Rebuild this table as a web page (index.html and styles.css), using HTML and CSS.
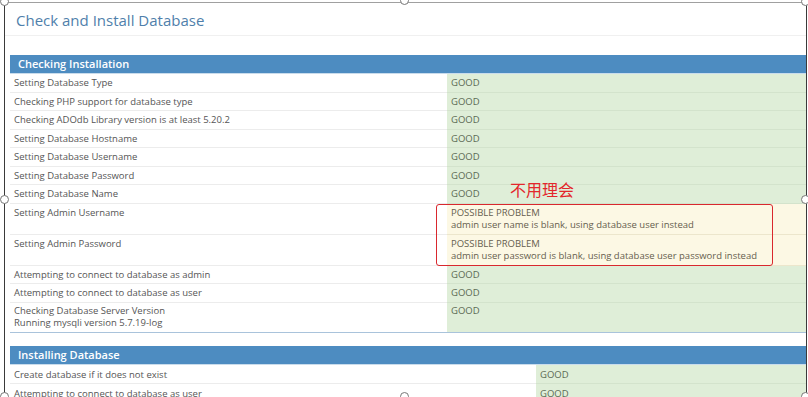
FILE: index.html
```html
<!DOCTYPE html>
<html>
<head>
<meta charset="utf-8">
<link rel="stylesheet" href="styles.css">
</head>
<body>
<div class="frame">
  <h1 class="title">Check and Install Database</h1>
  <div class="content">
    <div class="section-head">Checking Installation</div>
    <div class="table t1">
      <div class="lbl">Setting Database Type</div><div class="val ok">GOOD</div>
      <div class="lbl">Checking PHP support for database type</div><div class="val ok">GOOD</div>
      <div class="lbl">Checking ADOdb Library version is at least 5.20.2</div><div class="val ok">GOOD</div>
      <div class="lbl">Setting Database Hostname</div><div class="val ok">GOOD</div>
      <div class="lbl">Setting Database Username</div><div class="val ok">GOOD</div>
      <div class="lbl">Setting Database Password</div><div class="val ok">GOOD</div>
      <div class="lbl">Setting Database Name</div><div class="val ok">GOOD</div>
      <div class="lbl two">Setting Admin Username</div><div class="val warn two">POSSIBLE PROBLEM<br>admin user name is blank, using database user instead</div>
      <div class="lbl two">Setting Admin Password</div><div class="val warn two">POSSIBLE PROBLEM<br>admin user password is blank, using database user password instead</div>
      <div class="lbl">Attempting to connect to database as admin</div><div class="val ok">GOOD</div>
      <div class="lbl">Attempting to connect to database as user</div><div class="val ok">GOOD</div>
      <div class="lbl last">Checking Database Server Version<br>Running mysqli version 5.7.19-log</div><div class="val ok last">GOOD</div>
    </div>
    <div class="section-head second">Installing Database</div>
    <div class="table t2">
      <div class="lbl">Create database if it does not exist</div><div class="val ok">GOOD</div>
      <div class="lbl">Attempting to connect to database as user</div><div class="val ok">GOOD</div>
    </div>
  </div>
  <div class="note">不用理会</div>
  <div class="note-box"></div>
</div>
<div class="handle h-tl"></div>
<div class="handle h-tm"></div>
<div class="handle h-tr"></div>
<div class="handle h-ml"></div>
<div class="handle h-mr"></div>
<div class="handle h-bl"></div>
<div class="handle h-bm"></div>
<div class="handle h-br"></div>
</body>
</html>
```
FILE: styles.css
```css
html, body {
  margin: 0;
  padding: 0;
  background: #ffffff;
  width: 808px;
  height: 397px;
  overflow: hidden;
}
body {
  position: relative;
  font-family: "Open Sans", "Noto Sans", sans-serif;
  padding: 2px 0 0 4px;
  box-sizing: border-box;
}
.frame {
  position: relative;
  width: 803px;
  height: 400px;
  box-sizing: border-box;
  border-top: 1px solid #a0a0a0;
  border-left: 1px solid #3a3a3a;
  border-right: 1px solid #3a3a3a;
  overflow: hidden;
  background: #fff;
}
.title {
  margin: 0;
  height: 33px;
  box-sizing: border-box;
  padding: 7px 0 0 11px;
  font-size: 15px;
  font-weight: normal;
  line-height: 20px;
  color: #4f7fab;
  border-bottom: 1px solid #f0f0f0;
}
.content {
  padding: 19px 0 0 5px;
}
.section-head {
  height: 18px;
  line-height: 18px;
  background: #4d8cc1;
  color: #fff;
  font-size: 11px;
  font-weight: 600;
  padding-left: 8px;
  border-bottom: 1px solid #c9dcec;
}
.section-head.second {
  margin-top: 13px;
}
.table {
  display: grid;
  font-size: 9.5px;
  line-height: 12px;
}
.t1 { grid-template-columns: 437px 1fr; border-bottom: 1px solid #a9c3db; }
.t2 { grid-template-columns: 526px 1fr; }
.t2 .lbl, .t2 .val { padding-top: 4px; padding-bottom: 2px; }
.lbl, .val {
  padding: 3px 4px 2.5px 4px;
  border-bottom: 1px solid #ececec;
}
.lbl { color: #555; }
.val.ok {
  background: #dfeed8;
  color: #5c6a55;
  border-bottom-color: #d3e3cc;
}
.val.warn {
  background: #fcf8e4;
  color: #665e4e;
  border-bottom-color: #ece6cc;
}
.two { padding-bottom: 3px; }
.last { border-bottom: none; padding-top: 2px; padding-bottom: 3px; }
.note {
  position: absolute;
  left: 505px;
  top: 176px;
  font-family: "Noto Sans CJK SC", sans-serif;
  font-size: 16px;
  line-height: 20px;
  color: #e3262b;
}
.note-box {
  position: absolute;
  left: 431px;
  top: 201px;
  width: 337px;
  height: 62px;
  box-sizing: border-box;
  border: 1px solid #d9282e;
  border-radius: 3px;
}
.handle {
  position: absolute;
  width: 9px;
  height: 9px;
  border: 1px solid #777;
  border-radius: 50%;
  background: #fff;
  box-sizing: border-box;
}
.h-tl { left: 0; top: -3px; }
.h-tm { left: 400px; top: -4px; }
.h-tr { left: 801px; top: -3px; }
.h-ml { left: 0; top: 195px; }
.h-mr { left: 801px; top: 195px; }
.h-bl { left: 0; top: 392px; }
.h-bm { left: 400px; top: 392px; }
.h-br { left: 801px; top: 392px; }
```
